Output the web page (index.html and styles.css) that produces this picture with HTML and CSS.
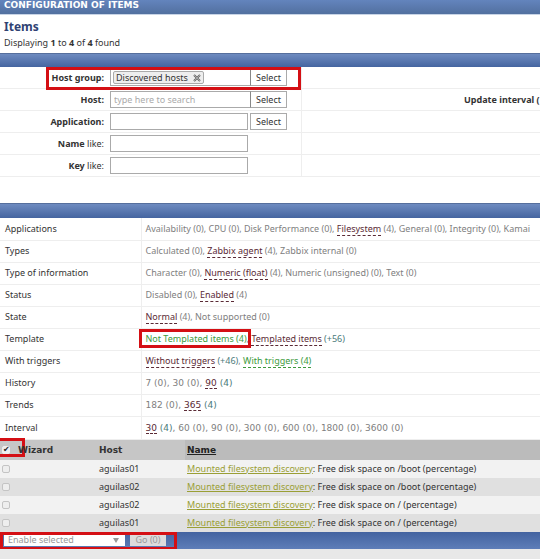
FILE: index.html
```html
<!DOCTYPE html>
<html lang="en">

<head>
    <meta charset="UTF-8">
    <meta name="viewport" content="width=device-width, initial-scale=1.0">
    <title>Configuration of items</title>
    <link rel="stylesheet" href="styles.css">
</head>

<body>
    <div class="page-title">CONFIGURATION OF ITEMS</div>
    <header class="page-header">
        <h1>Items</h1>
        <p>Displaying <b>1</b> to <b>4</b> of <b>4</b> found</p>
    </header>

    <div class="bar"></div>

    <form class="filter">
        <div class="filter-row">
            <div class="filter-cell">
                <label for="hostGroup"><b>Host group:</b></label>
                <div class="multiselect">
                    <span class="tag">Discovered hosts
                        <button type="button" class="tag-close" aria-label="Remove">
                            <svg width="8" height="8" viewBox="0 0 8 8"><path d="M1 1 L7 7 M7 1 L1 7" stroke="#666" stroke-width="2" fill="none"/><path d="M1 1 L7 7 M7 1 L1 7" stroke="#ccc" stroke-width="0.6" fill="none"/></svg>
                        </button>
                    </span>
                    <input type="text" id="hostGroup">
                </div>
                <button type="button" class="select-btn joined">Select</button>
                <span class="mark mark-group"></span>
            </div>
            <div class="filter-cell right"></div>
        </div>
        <div class="filter-row">
            <div class="filter-cell">
                <label for="host"><b>Host:</b></label>
                <div class="multiselect">
                    <input type="text" id="host" placeholder="type here to search">
                </div>
                <button type="button" class="select-btn joined">Select</button>
            </div>
            <div class="filter-cell right"><b>Update interval (</b></div>
        </div>
        <div class="filter-row">
            <div class="filter-cell">
                <label for="application"><b>Application:</b></label>
                <input type="text" id="application" class="text-input">
                <button type="button" class="select-btn">Select</button>
            </div>
            <div class="filter-cell right"></div>
        </div>
        <div class="filter-row">
            <div class="filter-cell">
                <label for="name"><b>Name</b> like:</label>
                <input type="text" id="name" class="text-input">
            </div>
            <div class="filter-cell right"></div>
        </div>
        <div class="filter-row">
            <div class="filter-cell">
                <label for="key"><b>Key</b> like:</label>
                <input type="text" id="key" class="text-input">
            </div>
            <div class="filter-cell right"></div>
        </div>
    </form>

    <div class="bar"></div>

    <table class="subfilter">
        <tr>
            <th>Applications</th>
            <td>Availability (0), CPU (0), Disk Performance (0), <a href="#">Filesystem</a> (4), General (0), Integrity (0), Kamai</td>
        </tr>
        <tr>
            <th>Types</th>
            <td>Calculated (0), <a href="#">Zabbix agent</a> (4), Zabbix internal (0)</td>
        </tr>
        <tr>
            <th>Type of information</th>
            <td>Character (0), <a href="#">Numeric (float)</a> (4), Numeric (unsigned) (0), Text (0)</td>
        </tr>
        <tr>
            <th>Status</th>
            <td>Disabled (0), <a href="#">Enabled</a> (4)</td>
        </tr>
        <tr>
            <th>State</th>
            <td><a href="#">Normal</a> (4), Not supported (0)</td>
        </tr>
        <tr>
            <th>Template</th>
            <td><span class="marked"><a href="#" class="on">Not Templated items (4)</a><span class="mark mark-template"></span></span>, <a href="#">Templated items</a> <span class="plus">(+56)</span></td>
        </tr>
        <tr>
            <th>With triggers</th>
            <td><a href="#">Without triggers</a> <span class="plus">(+46)</span>, <a href="#" class="on">With triggers (4)</a></td>
        </tr>
        <tr>
            <th>History</th>
            <td class="numbers">7 (0), 30 (0), <a href="#">90</a> <span class="plus">(4)</span></td>
        </tr>
        <tr>
            <th>Trends</th>
            <td class="numbers">182 (0), <a href="#">365</a> <span class="plus">(4)</span></td>
        </tr>
        <tr>
            <th>Interval</th>
            <td class="numbers"><a href="#">30</a> <span class="plus">(4)</span>, 60 (0), 90 (0), 300 (0), 600 (0), 1800 (0), 3600 (0)</td>
        </tr>
    </table>

    <table class="items">
        <thead>
            <tr>
                <th class="check"><input type="checkbox" aria-label="Select all" checked><span class="mark mark-check"></span></th>
                <th class="wizard">Wizard</th>
                <th class="host">Host</th>
                <th class="name"><a href="#">Name</a></th>
            </tr>
        </thead>
        <tbody>
            <tr>
                <td><input type="checkbox" aria-label="Select item"></td>
                <td></td>
                <td>aguilas01</td>
                <td><a href="#">Mounted filesystem discovery</a>: Free disk space on /boot (percentage)</td>
            </tr>
            <tr>
                <td><input type="checkbox" aria-label="Select item"></td>
                <td></td>
                <td>aguilas02</td>
                <td><a href="#">Mounted filesystem discovery</a>: Free disk space on /boot (percentage)</td>
            </tr>
            <tr>
                <td><input type="checkbox" aria-label="Select item"></td>
                <td></td>
                <td>aguilas02</td>
                <td><a href="#">Mounted filesystem discovery</a>: Free disk space on / (percentage)</td>
            </tr>
            <tr>
                <td><input type="checkbox" aria-label="Select item"></td>
                <td></td>
                <td>aguilas01</td>
                <td><a href="#">Mounted filesystem discovery</a>: Free disk space on / (percentage)</td>
            </tr>
        </tbody>
    </table>

    <footer class="actions">
        <div class="select-wrap">
            <select aria-label="Action" disabled>
                <option>Enable selected</option>
            </select>
            <svg width="6" height="6" viewBox="0 0 6 6"><path d="M0 1 L6 1 L3 6 Z" fill="#999"/></svg>
        </div>
        <button type="button" disabled>Go (0)</button>
        <span class="mark mark-actions"></span>
    </footer>
</body>

</html>
```

FILE: styles.css
```css
* {
    box-sizing: border-box;
}

body {
    margin: 0;
    font-family: 'Noto Sans', 'DejaVu Sans', sans-serif;
    font-size: 9px;
    line-height: 12px;
    color: #333;
    background-color: #e8e8e8;
    overflow-x: hidden;
}

input,
button,
select {
    font: inherit;
    color: inherit;
    margin: 0;
}

.page-title {
    height: 14px;
    padding-left: 4px;
    font-family: 'DejaVu Sans', sans-serif;
    font-size: 9px;
    line-height: 11px;
    font-weight: bold;
    color: #fff;
    background: linear-gradient(#6384bd, #52709f);
    white-space: nowrap;
}

.page-header {
    padding: 4px 4px 3px;
    border-top: 1px solid #c8d4e6;
    background-color: #fff;
}

h1 {
    margin: 0;
    font-size: 12px;
    line-height: 16px;
    color: #2f4273;
}

p {
    margin: 0;
    line-height: 15px;
}

.bar {
    height: 14px;
    border-top: 1px solid #566f9d;
    background: linear-gradient(#6e8bc0, #4565a0);
}

.filter {
    padding-bottom: 26px;
    background-color: #fff;
}

.filter + .bar {
    height: 15px;
}

.filter-row {
    display: flex;
    height: 22px;
    border-bottom: 1px solid #eee;
}

.filter-cell {
    position: relative;
    display: flex;
    align-items: center;
    width: 302px;
    border-right: 1px solid #eee;
    white-space: nowrap;
}

.filter-cell.right {
    flex: 1;
    min-width: 0;
    padding-left: 162px;
    border-right: none;
    overflow: hidden;
}

.filter-cell label {
    width: 104px;
    margin-right: 6px;
    text-align: right;
}

.multiselect {
    display: flex;
    align-items: center;
    width: 141px;
    height: 17px;
    padding: 0 2px;
    border: 1px solid #aaa;
}

.multiselect input {
    flex: 1;
    min-width: 0;
    padding: 0 1px;
    border: none;
    outline: none;
}

.multiselect input::placeholder {
    color: #aaa;
}

.tag {
    display: flex;
    align-items: center;
    gap: 5px;
    height: 13px;
    padding: 0 2px;
    border: 1px solid #aaa;
    border-radius: 2px;
    background-color: #eee;
}

.tag-close {
    display: flex;
    padding: 0;
    border: none;
    background: none;
}

.text-input {
    width: 138px;
    height: 17px;
    margin-right: 2px;
    border: 1px solid #aaa;
}

.select-btn {
    width: 37px;
    height: 17px;
    padding: 0;
    border: 1px solid #aaa;
    background-color: #fff;
}

.select-btn.joined {
    border-left-color: #888;
    margin-left: -1px;
}

table {
    width: 100%;
    border-collapse: collapse;
    table-layout: fixed;
}

th,
td {
    text-align: left;
    white-space: nowrap;
}

.subfilter {
    background-color: #fff;
}

.subfilter tr {
    height: 22px;
}

.subfilter tr:last-child {
    height: 23px;
}

.subfilter th {
    width: 141px;
    padding: 0 5px;
    border-right: 1px solid #eee;
    border-bottom: 1px solid #eee;
    font-weight: normal;
}

.subfilter td {
    padding: 0 0 0 4px;
    border-bottom: 1px solid #eee;
    color: #808080;
}

.subfilter .numbers {
    font-family: 'DejaVu Sans', sans-serif;
}

.subfilter a {
    color: #5a2a35;
    text-decoration: none;
    border-bottom: 1px dashed #5a2a35;
}

.subfilter a.on {
    color: #3c9a3c;
    border-bottom-color: #3c9a3c;
}

.subfilter .plus {
    color: #4a7a7a;
}

.marked {
    position: relative;
}

.items tr {
    height: 18px;
}

.items th,
.items td {
    position: relative;
    padding: 0 0 0 2px;
}

.items thead tr {
    height: 20px;
    background-color: #c6c6c6;
}

.items thead th {
    font-family: 'DejaVu Sans', sans-serif;
}

.items .check {
    width: 16px;
}

.items .wizard {
    width: 81px;
}

.items .host {
    width: 88px;
}

.items .name {
    background-color: #bbb;
}

.items .name a {
    color: #222;
}

.items tbody tr {
    background-color: #f2f2f2;
}

.items tbody tr:nth-child(even) {
    background-color: #e0e0e0;
}

.items td a {
    color: #9a9f35;
}

.items input {
    display: block;
    appearance: none;
    width: 8px;
    height: 8px;
    border: 1px solid #c4c4c4;
    border-radius: 2px;
    background-color: #eee;
}

.items input:checked {
    border-color: #eee;
    background: #eee;
}

.items input:checked::after {
    content: "✔";
    display: block;
    font-size: 8px;
    line-height: 6px;
    color: #222;
}

.actions {
    position: relative;
    display: flex;
    align-items: center;
    gap: 5px;
    height: 17px;
    padding-left: 4px;
    background: linear-gradient(#4363a0, #5d7db8);
}

.select-wrap {
    display: flex;
    align-items: center;
    width: 121px;
    height: 12px;
    padding-right: 6px;
    background-color: #fff;
}

.actions select {
    flex: 1;
    appearance: none;
    padding: 0 4px;
    border: none;
    background: none;
    color: #999;
    opacity: 1;
}

.actions button {
    width: 36px;
    height: 12px;
    padding: 0;
    border: none;
    background-color: #ddd;
    color: #999;
}

/* red highlight frames */
.mark {
    position: absolute;
    border: 3px solid #d40f14;
    pointer-events: none;
}

.mark-group {
    left: 46px;
    right: 0;
    top: 0;
    bottom: -2px;
}

.mark-template {
    inset: -3px -4px -3px -7px;
}

.mark-check {
    left: -3px;
    right: -9px;
    top: -2px;
    bottom: 3px;
}

.mark-actions {
    left: 0;
    top: 0;
    bottom: -1px;
    width: 177px;
}
```
